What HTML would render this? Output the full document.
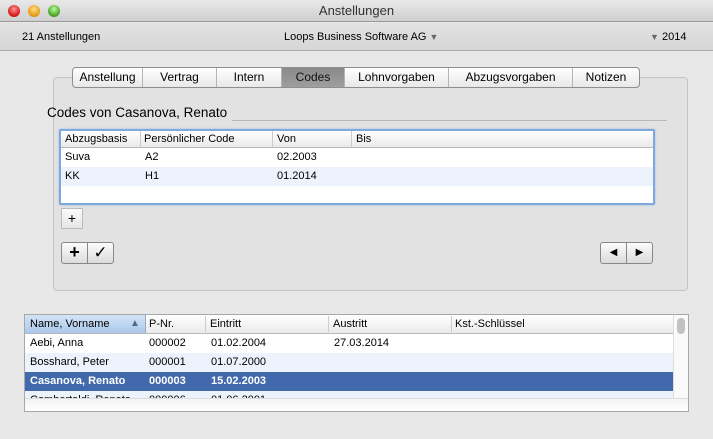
<!DOCTYPE html>
<html><head><meta charset="utf-8"><style>
*{box-sizing:border-box;margin:0;padding:0}
body{width:713px;height:439px;overflow:hidden;background:#e8e8e8;font-family:"Liberation Sans",sans-serif;font-size:11px;color:#000;position:relative}
.a{position:absolute}
.title{left:0;top:0;width:713px;height:22px;background:linear-gradient(#e9e9e9,#cfcfcf);border-bottom:1px solid #999;text-align:center;font-size:13px;line-height:22px;color:#333}
.tb{left:0;top:23px;width:713px;height:28px;background:linear-gradient(#e2e2e2,#d6d6d6);border-bottom:1px solid #aaa}
.dot{width:12px;height:12px;border-radius:50%;top:5px}
.panel{left:53px;top:77px;width:635px;height:214px;border:1px solid #c4c4c4;border-radius:4px;background:#e2e2e2}
.tabs{left:72px;top:67px;height:21px;display:flex;border:1px solid #8e8e8e;border-radius:4px;background:linear-gradient(#fff,#e8e8e8);overflow:hidden}
.tabs div{border-right:1px solid #b5b5b5;text-align:center;line-height:19px;font-size:12px}
.tabs div:last-child{border-right:none}
.tabs .s{background:linear-gradient(#8a8a8a,#9e9e9e);color:#111}
.tbl{background:#fff}
.hd{background:linear-gradient(#fff,#eaeaea);border-bottom:1px solid #b8b8b8}
.btn{border:1px solid #888;border-radius:3px;background:linear-gradient(#fbfbfb,#dcdcdc);display:flex}
</style></head><body>
<div class="a title">Anstellungen</div>
<div class="a dot" style="left:8px;background:radial-gradient(circle at 50% 35%,#f99,#d22 60%,#a00)"></div>
<div class="a dot" style="left:28px;background:radial-gradient(circle at 50% 35%,#fd8,#e9a21a 60%,#b70)"></div>
<div class="a dot" style="left:48px;background:radial-gradient(circle at 50% 35%,#bf9,#5a3 60%,#370)"></div>
<div class="a tb"></div>
<div class="a" style="left:22px;top:31px">21 Anstellungen</div>
<div class="a" style="left:284px;top:31px">Loops Business Software AG <span style="color:#666;font-size:9px">▼</span></div>
<div class="a" style="left:650px;top:31px"><span style="color:#666;font-size:9px">▼</span> 2014</div>
<div class="a panel"></div>
<div class="a tabs">
<div style="width:70px">Anstellung</div><div style="width:74px">Vertrag</div><div style="width:65px">Intern</div><div class="s" style="width:63px">Codes</div><div style="width:104px">Lohnvorgaben</div><div style="width:124px">Abzugsvorgaben</div><div style="width:66px">Notizen</div>
</div>
<div class="a" style="left:47px;top:105px;font-size:13.5px">Codes von Casanova, Renato</div>
<div class="a" style="left:232px;top:120px;width:435px;height:1px;background:#b8b8b8"></div>
<div class="a tbl" style="left:59px;top:129px;width:596px;height:76px;border:2px solid #7fa8de;border-radius:2px;box-shadow:0 0 2px #9bbbe6">
 <div class="hd" style="height:17px;position:relative">
  <span class="a" style="left:4px;top:2px">Abzugsbasis</span>
  <span class="a" style="left:79px;top:0;height:16px;border-left:1px solid #ccc"></span>
  <span class="a" style="left:83px;top:2px">Persönlicher Code</span>
  <span class="a" style="left:211px;top:0;height:16px;border-left:1px solid #ccc"></span>
  <span class="a" style="left:216px;top:2px">Von</span>
  <span class="a" style="left:290px;top:0;height:16px;border-left:1px solid #ccc"></span>
  <span class="a" style="left:295px;top:2px">Bis</span>
 </div>
 <div style="height:19px;position:relative"><span class="a" style="left:4px;top:3px">Suva</span><span class="a" style="left:84px;top:3px">A2</span><span class="a" style="left:216px;top:3px">02.2003</span></div>
 <div style="height:19px;position:relative;background:#edf3fc"><span class="a" style="left:4px;top:3px">KK</span><span class="a" style="left:84px;top:3px">H1</span><span class="a" style="left:216px;top:3px">01.2014</span></div>
 <div style="height:17px"></div>
</div>
<div class="a" style="left:61px;top:208px;width:22px;height:21px;border:1px solid #bbb;background:linear-gradient(#fafafa,#e6e6e6);text-align:center;line-height:19px;font-size:14px">+</div>
<div class="a btn" style="left:61px;top:242px;width:53px;height:22px">
 <div style="width:26px;border-right:1px solid #888;text-align:center;font-size:18px;line-height:19px;font-weight:bold">+</div>
 <div style="flex:1;text-align:center;font-size:17px;line-height:20px">✓</div>
</div>
<div class="a btn" style="left:600px;top:242px;width:53px;height:22px">
 <div style="width:26px;border-right:1px solid #888;text-align:center;font-size:10px;line-height:20px">◀</div>
 <div style="flex:1;text-align:center;font-size:10px;line-height:20px">▶</div>
</div>
<div class="a tbl" style="left:24px;top:314px;width:665px;height:98px;border:1px solid #a8a8a8;overflow:hidden">
 <div class="hd a" style="left:0;top:0;width:648px;height:19px">
  <div class="a" style="left:0;top:0;width:121px;height:18px;background:linear-gradient(#d4e4f6,#a9c8ec);border-right:1px solid #9ab"></div>
  <span class="a" style="left:5px;top:3px">Name, Vorname</span><span class="a" style="left:105px;top:3px;color:#4a6a90;font-size:10px">▲</span>
  <span class="a" style="left:124px;top:3px">P-Nr.</span>
  <span class="a" style="left:180px;top:1px;height:16px;border-left:1px solid #ccc"></span>
  <span class="a" style="left:185px;top:3px">Eintritt</span>
  <span class="a" style="left:303px;top:1px;height:16px;border-left:1px solid #ccc"></span>
  <span class="a" style="left:308px;top:3px">Austritt</span>
  <span class="a" style="left:426px;top:1px;height:16px;border-left:1px solid #ccc"></span>
  <span class="a" style="left:430px;top:3px">Kst.-Schlüssel</span>
 </div>
 <div class="a" style="left:648px;top:0;width:16px;height:83px;background:#fafafa;border-left:1px solid #ddd"><div style="margin:3px 0 0 3px;width:8px;height:16px;border-radius:4px;background:#c2c2c2"></div></div>
 <div class="a" style="left:0;top:19px;width:648px;height:19px"><span class="a" style="left:5px;top:3px">Aebi, Anna</span><span class="a" style="left:124px;top:3px">000002</span><span class="a" style="left:186px;top:3px">01.02.2004</span><span class="a" style="left:309px;top:3px">27.03.2014</span></div>
 <div class="a" style="left:0;top:38px;width:648px;height:19px;background:#edf3fc"><span class="a" style="left:5px;top:3px">Bosshard, Peter</span><span class="a" style="left:124px;top:3px">000001</span><span class="a" style="left:186px;top:3px">01.07.2000</span></div>
 <div class="a" style="left:0;top:57px;width:648px;height:19px;background:#4169ab;color:#fff;font-weight:bold"><span class="a" style="left:5px;top:3px">Casanova, Renato</span><span class="a" style="left:124px;top:3px">000003</span><span class="a" style="left:186px;top:3px">15.02.2003</span></div>
 <div class="a" style="left:0;top:76px;width:648px;height:8px;overflow:hidden;background:#edf3fc"><span class="a" style="left:5px;top:3px">Combertaldi, Renato</span><span class="a" style="left:124px;top:3px">000006</span><span class="a" style="left:186px;top:3px">01.06.2001</span></div>
 <div class="a" style="left:0;top:83px;width:664px;height:14px;background:linear-gradient(#f4f4f4,#fff);border-top:1px solid #ddd"></div>
</div>
</body></html>
